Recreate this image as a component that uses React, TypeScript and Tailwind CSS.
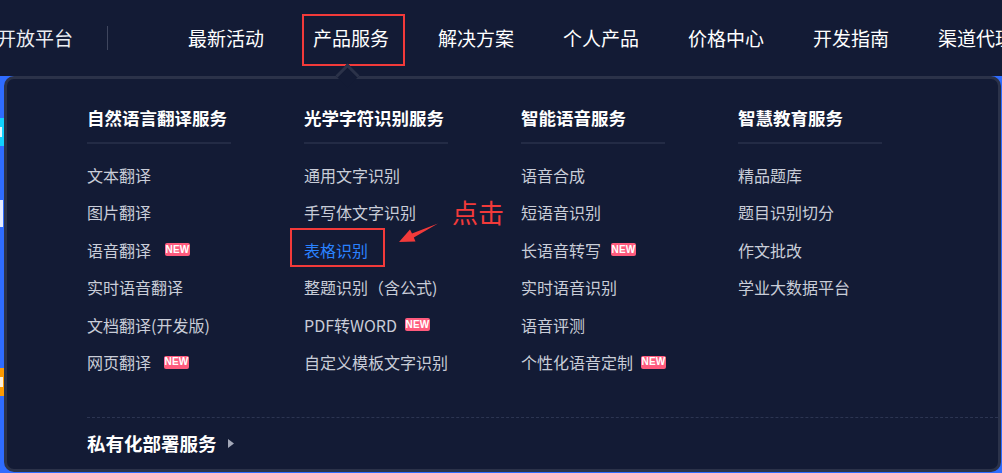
import React from "react";

const NavItems = ["最新活动", "产品服务", "解决方案", "个人产品", "价格中心", "开发指南", "渠道代理"];

type Item = { t: string; isNew?: boolean; active?: boolean; ml?: string };
type Col = { title: string; items: Item[] };

const cols: Col[] = [
  {
    title: "自然语言翻译服务",
    items: [
      { t: "文本翻译" },
      { t: "图片翻译" },
      { t: "语音翻译", isNew: true, ml: "ml-[14px]" },
      { t: "实时语音翻译" },
      { t: "文档翻译(开发版)" },
      { t: "网页翻译", isNew: true, ml: "ml-[13px]" },
    ],
  },
  {
    title: "光学字符识别服务",
    items: [
      { t: "通用文字识别" },
      { t: "手写体文字识别" },
      { t: "表格识别", active: true },
      { t: "整题识别（含公式)" },
      { t: "PDF转WORD", isNew: true, ml: "ml-[8px]" },
      { t: "自定义模板文字识别" },
    ],
  },
  {
    title: "智能语音服务",
    items: [
      { t: "语音合成" },
      { t: "短语音识别" },
      { t: "长语音转写", isNew: true, ml: "ml-[10px]" },
      { t: "实时语音识别" },
      { t: "语音评测" },
      { t: "个性化语音定制", isNew: true, ml: "ml-[8px]" },
    ],
  },
  {
    title: "智慧教育服务",
    items: [{ t: "精品题库" }, { t: "题目识别切分" }, { t: "作文批改" }, { t: "学业大数据平台" }],
  },
];

function NewBadge({ ml }: { ml?: string }) {
  return (
    <span
      className={`${ml ?? "ml-[8px]"} inline-flex h-[13px] w-[25px] items-center justify-center rounded-[2px] bg-[#ff5b7d] font-['Liberation_Sans',sans-serif] text-[10px] font-bold leading-none tracking-[0.2px] text-white`}
    >
      NEW
    </span>
  );
}

export default function App() {
  return (
    <div className="relative h-[473px] w-[1002px] overflow-hidden bg-[#2f6cff] font-['Noto_Sans_CJK_SC','Noto_Sans',sans-serif]">
      {/* top nav */}
      <header className="flex h-[76px] items-center overflow-hidden bg-[#131b35] text-[19px] text-white">
        <div className="ml-[-3px] shrink-0 whitespace-nowrap text-[#eceef3]">开放平台</div>
        <div className="ml-[34px] h-[24px] w-px shrink-0 bg-[#3f465e]" />
        <nav className="ml-[80px] flex shrink-0 gap-[49px] whitespace-nowrap">
          {NavItems.map((n) => (
            <span key={n}>{n}</span>
          ))}
        </nav>
      </header>

      {/* background banner bits at the left edge */}
      <div className="flex w-[4px] flex-col">
        <div className="mt-[42px] flex h-[28px] flex-col justify-center bg-[#10d2ff]">
          <div className="h-[10px] w-[2px] bg-[#e0f6ff]" />
        </div>
        <div className="mt-[54px] h-[27px] w-[3px] bg-[#e6ecff]" />
        <div className="mt-[141px] flex h-[28px] items-center bg-[#ff9a00]">
          <div className="h-[10px] w-[3px] bg-[#fff1dc]" />
        </div>
      </div>

      {/* red annotation box around 产品服务 */}
      <div className="absolute left-[302px] top-[14px] h-[52px] w-[103px] border-[2px] border-[#f23a3a]" />

      {/* dropdown panel */}
      <div className="absolute left-[4px] top-[76px] h-[396px] w-[997px] rounded-[10px] border-[3px] border-[#2b3249] bg-[#131b35]">
        {/* caret */}
        <div className="absolute left-[332px] top-[-12px] h-[17px] w-[17px] rotate-45 border-l-[3px] border-t-[3px] border-[#2b3249] bg-[#131b35]" />

        <div className="relative flex pl-[80px] pt-[27px]">
          {cols.map((c) => (
            <div key={c.title} className="w-[217px]">
              <div className="w-[144px] border-b-[2px] border-[#232b45] pb-[12px] text-[17.5px] font-bold leading-[24px] text-white">
                {c.title}
              </div>
              <ul className="mt-[12px]">
                {c.items.map((it) => (
                  <li
                    key={it.t}
                    className={`flex h-[37.5px] items-center whitespace-nowrap text-[16px] ${
                      it.active ? "text-[#2a82ff]" : "text-[#c9cdd8]"
                    }`}
                  >
                    {it.t}
                    {it.isNew && <NewBadge ml={it.ml} />}
                  </li>
                ))}
              </ul>
            </div>
          ))}
        </div>

        <div className="ml-[80px] mt-[36px] border-t border-dashed border-[#2c3552]" />
        <div className="ml-[80px] mt-[12px] flex items-center text-[18.5px] font-bold leading-[26px] text-white">
          私有化部署服务
          <svg className="ml-[11px]" width="6" height="9" viewBox="0 0 6 9">
            <polygon points="0,0 6,4.5 0,9" fill="#a3a8b8" />
          </svg>
        </div>
      </div>

      {/* annotation: red box around 表格识别 */}
      <div className="absolute left-[290px] top-[228px] h-[39px] w-[95px] border-[2px] border-[#f23a3a]" />

      {/* annotation arrow + text */}
      <svg className="absolute left-0 top-0" width="1002" height="473" viewBox="0 0 1002 473">
        <polygon
          points="399,242 410,229.5 412,233.6 438,223.5 413.8,237.6 415.5,241.5"
          fill="#f23a3a"
        />
      </svg>
      <div className="absolute left-[452px] top-[195px] text-[26px] leading-[34px] text-[#f23a3a]">点击</div>
    </div>
  );
}
